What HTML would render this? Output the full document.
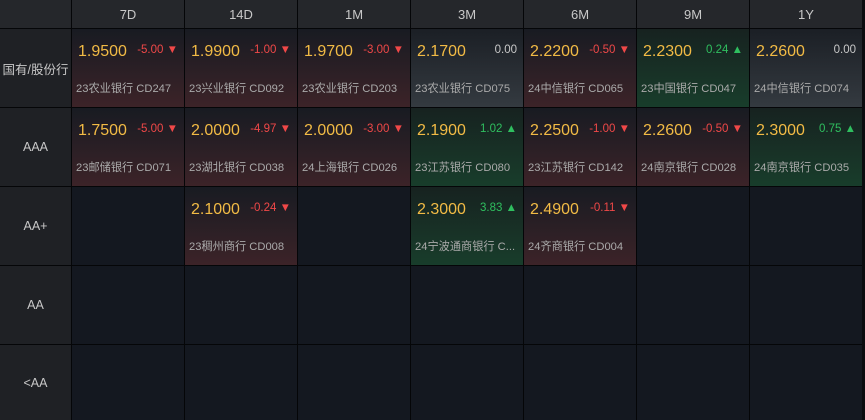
<!DOCTYPE html><html><head><meta charset="utf-8"><style>
body{margin:0;width:865px;height:420px;background:#0b0c0f;overflow:hidden;font-family:"Liberation Sans","Noto Sans CJK SC",sans-serif}
.g{display:grid;grid-template-columns:71px repeat(7,112px);grid-template-rows:28px 78px 78px 78px 78px 75px;gap:1px;background:#050608;width:862px;height:420px}
.h{background:#25272b;color:#c8c8c8;font-size:13px;display:flex;align-items:center;justify-content:center}
.l{background:#1f2125;color:#c8c8c8;font-size:12.5px;display:flex;align-items:center;justify-content:center}
.e{background:#141820}
.c{position:relative}
.r{background:linear-gradient(#181b22,#3c2328)}
.gr{background:linear-gradient(#172220,#183d2b)}
.n{background:linear-gradient(#1b1f25,#343a40)}
.v{position:absolute;left:6px;top:14px;font-size:16px;color:#f2bb45}
.d{position:absolute;right:6px;top:15px;font-size:11.5px}
.dn{color:#f04848}.up{color:#2fbf5f}.z{color:#c8c8c8}
.t{position:absolute;left:4px;top:51px;font-size:11.2px;color:#aaa;white-space:nowrap}
</style></head><body><div class="g">
<div class="h"></div><div class="h">7D</div><div class="h">14D</div><div class="h">1M</div><div class="h">3M</div><div class="h">6M</div><div class="h">9M</div><div class="h">1Y</div>
<div class="l">国有/股份行</div>
<div class="c r"><span class="v">1.9500</span><span class="d dn">-5.00 ▼</span><span class="t">23农业银行 CD247</span></div>
<div class="c r"><span class="v">1.9900</span><span class="d dn">-1.00 ▼</span><span class="t">23兴业银行 CD092</span></div>
<div class="c r"><span class="v">1.9700</span><span class="d dn">-3.00 ▼</span><span class="t">23农业银行 CD203</span></div>
<div class="c n"><span class="v">2.1700</span><span class="d z">0.00</span><span class="t">23农业银行 CD075</span></div>
<div class="c r"><span class="v">2.2200</span><span class="d dn">-0.50 ▼</span><span class="t">24中信银行 CD065</span></div>
<div class="c gr"><span class="v">2.2300</span><span class="d up">0.24 ▲</span><span class="t">23中国银行 CD047</span></div>
<div class="c n"><span class="v">2.2600</span><span class="d z">0.00</span><span class="t">24中信银行 CD074</span></div>
<div class="l">AAA</div>
<div class="c r"><span class="v">1.7500</span><span class="d dn">-5.00 ▼</span><span class="t">23邮储银行 CD071</span></div>
<div class="c r"><span class="v">2.0000</span><span class="d dn">-4.97 ▼</span><span class="t">23湖北银行 CD038</span></div>
<div class="c r"><span class="v">2.0000</span><span class="d dn">-3.00 ▼</span><span class="t">24上海银行 CD026</span></div>
<div class="c gr"><span class="v">2.1900</span><span class="d up">1.02 ▲</span><span class="t">23江苏银行 CD080</span></div>
<div class="c r"><span class="v">2.2500</span><span class="d dn">-1.00 ▼</span><span class="t">23江苏银行 CD142</span></div>
<div class="c r"><span class="v">2.2600</span><span class="d dn">-0.50 ▼</span><span class="t">24南京银行 CD028</span></div>
<div class="c gr"><span class="v">2.3000</span><span class="d up">0.75 ▲</span><span class="t">24南京银行 CD035</span></div>
<div class="l">AA+</div>
<div class="e"></div>
<div class="c r"><span class="v">2.1000</span><span class="d dn">-0.24 ▼</span><span class="t">23稠州商行 CD008</span></div>
<div class="e"></div>
<div class="c gr"><span class="v">2.3000</span><span class="d up">3.83 ▲</span><span class="t">24宁波通商银行 C...</span></div>
<div class="c r"><span class="v">2.4900</span><span class="d dn">-0.11 ▼</span><span class="t">24齐商银行 CD004</span></div>
<div class="e"></div><div class="e"></div>
<div class="l">AA</div><div class="e"></div><div class="e"></div><div class="e"></div><div class="e"></div><div class="e"></div><div class="e"></div><div class="e"></div>
<div class="l">&lt;AA</div><div class="e"></div><div class="e"></div><div class="e"></div><div class="e"></div><div class="e"></div><div class="e"></div><div class="e"></div>
</div></body></html>
